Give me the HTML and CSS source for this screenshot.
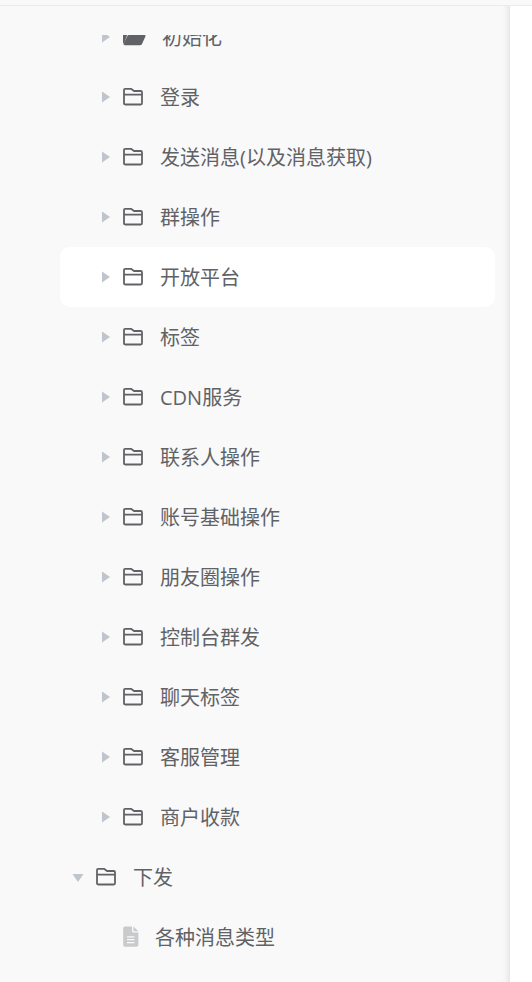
FILE: index.html
```
<!DOCTYPE html>
<html lang="zh-CN">
<head>
    <meta charset="UTF-8">
    <meta name="viewport" content="width=device-width, initial-scale=1.0">
    <title>接口目录</title>
    <link rel="stylesheet" href="styles.css">
</head>
<body>

<!-- Iconos -->
<svg class="sprite" aria-hidden="true">
    <symbol id="caret" viewBox="0 0 8 12">
        <path d="M0 0.5 L8 6 L0 11.5 Z" fill="currentColor"/>
    </symbol>
    <symbol id="folder" viewBox="0 0 22 20">
        <path d="M2 16.8 V2.8 Q2 1.8 3.1 1.8 H9 L12 4 H18.8 Q20 4 20 5.2 V16.3 Q20 17.5 18.8 17.5 H3.2 Q2 17.5 2 16.3 Z M2 7.6 H20" fill="none" stroke="currentColor" stroke-width="1.8" stroke-linejoin="round"/>
    </symbol>
    <symbol id="folder-open" viewBox="0 0 24 20">
        <path d="M1 16 V3 Q1 1 3 1 H8.5 L11.5 4 H18 Q20 4 20 6 V7.2 H7 Q5.6 7.2 5 8.5 L2 16.5 Z" fill="currentColor"/>
        <path d="M6.8 8 H22.5 Q24 8 23.4 9.4 L20 17 Q19.4 18.2 17.8 18.2 H3 Q1 18.2 1.6 16.8 L5.4 9 Q5.8 8 6.8 8 Z" fill="currentColor"/>
    </symbol>
    <symbol id="file" viewBox="0 0 16 22">
        <path d="M2 0.5 H9 V5 Q9 6.5 10.5 6.5 H15.4 V18.9 Q15.4 20.7 13.6 20.7 H2 Q0.2 20.7 0.2 18.9 V2.3 Q0.2 0.5 2 0.5 Z M10.4 0.5 L15.4 5.3 H10.4 Z" fill="currentColor"/>
        <path d="M4 10.8 H11.4 M4 13.7 H11.4 M4 16.6 H11.4" stroke="#f9f9f9" stroke-width="1.3"/>
    </symbol>
</svg>

<header class="topbar"></header>
<div class="layout">
    <nav class="sidebar" aria-label="接口目录">
        <div class="scroll">
            <ul class="tree">
                <li>
                    <ul class="children">
                        <li class="row"><button class="toggle" aria-label="展开"><svg><use href="#caret"/></svg></button><a href="#"><svg class="icon open"><use href="#folder-open"/></svg>初始化</a></li>
                        <li class="row"><button class="toggle" aria-label="展开"><svg><use href="#caret"/></svg></button><a href="#"><svg class="icon"><use href="#folder"/></svg>登录</a></li>
                        <li class="row"><button class="toggle" aria-label="展开"><svg><use href="#caret"/></svg></button><a href="#"><svg class="icon"><use href="#folder"/></svg>发送消息(以及消息获取)</a></li>
                        <li class="row"><button class="toggle" aria-label="展开"><svg><use href="#caret"/></svg></button><a href="#"><svg class="icon"><use href="#folder"/></svg>群操作</a></li>
                        <li class="row active"><button class="toggle" aria-label="展开"><svg><use href="#caret"/></svg></button><a href="#"><svg class="icon"><use href="#folder"/></svg>开放平台</a></li>
                        <li class="row"><button class="toggle" aria-label="展开"><svg><use href="#caret"/></svg></button><a href="#"><svg class="icon"><use href="#folder"/></svg>标签</a></li>
                        <li class="row"><button class="toggle" aria-label="展开"><svg><use href="#caret"/></svg></button><a href="#"><svg class="icon"><use href="#folder"/></svg>CDN服务</a></li>
                        <li class="row"><button class="toggle" aria-label="展开"><svg><use href="#caret"/></svg></button><a href="#"><svg class="icon"><use href="#folder"/></svg>联系人操作</a></li>
                        <li class="row"><button class="toggle" aria-label="展开"><svg><use href="#caret"/></svg></button><a href="#"><svg class="icon"><use href="#folder"/></svg>账号基础操作</a></li>
                        <li class="row"><button class="toggle" aria-label="展开"><svg><use href="#caret"/></svg></button><a href="#"><svg class="icon"><use href="#folder"/></svg>朋友圈操作</a></li>
                        <li class="row"><button class="toggle" aria-label="展开"><svg><use href="#caret"/></svg></button><a href="#"><svg class="icon"><use href="#folder"/></svg>控制台群发</a></li>
                        <li class="row"><button class="toggle" aria-label="展开"><svg><use href="#caret"/></svg></button><a href="#"><svg class="icon"><use href="#folder"/></svg>聊天标签</a></li>
                        <li class="row"><button class="toggle" aria-label="展开"><svg><use href="#caret"/></svg></button><a href="#"><svg class="icon"><use href="#folder"/></svg>客服管理</a></li>
                        <li class="row"><button class="toggle" aria-label="展开"><svg><use href="#caret"/></svg></button><a href="#"><svg class="icon"><use href="#folder"/></svg>商户收款</a></li>
                    </ul>
                </li>
                <li>
                    <div class="row parent"><button class="toggle expanded" aria-label="收起"><svg><use href="#caret"/></svg></button><a href="#"><svg class="icon"><use href="#folder"/></svg>下发</a></div>
                    <ul class="children">
                        <li class="row leaf"><a href="#"><svg class="icon file"><use href="#file"/></svg>各种消息类型</a></li>
                    </ul>
                </li>
            </ul>
        </div>
    </nav>
    <main class="content"></main>
</div>

</body>
</html>
```
FILE: styles.css
```
* {
    box-sizing: border-box;
}
body {
    display: flex;
    flex-direction: column;
    height: 100vh;
    margin: 0;
    overflow: hidden;
    background-color: #fff;
    color: #606266;
    font-family: "Open Sans", "Noto Sans CJK SC", sans-serif;
    font-size: 20px;
}
.sprite {
    position: absolute;
    width: 0;
    height: 0;
}
.topbar {
    flex: none;
    height: 6px;
    background-color: #f9f9f9;
    border-bottom: 1px solid #ebebeb;
}
.layout {
    display: flex;
    flex: 1;
    min-height: 0;
}
.sidebar {
    flex: 0 1 510px;
    padding: 29px 15px 0 60px;
    background-color: #f9f9f9;
    box-shadow: inset -8px 0 8px -8px rgba(0, 0, 0, 0.15);
}
.content {
    flex: 1;
}
.scroll {
    height: 100%;
    overflow: hidden;
}
ul {
    margin: 0;
    padding: 0;
    list-style: none;
}
/* la lista queda desplazada, la primera fila se ve a medias */
.tree {
    margin-top: -28px;
}
.row {
    display: flex;
    align-items: center;
    height: 60px;
    padding-top: 2px;
    padding-left: 38px;
    border-radius: 10px;
}
.row.parent {
    padding-left: 10px;
}
.row.leaf {
    padding-left: 63px;
}
.row:hover,
.row.active {
    background-color: #fff;
}
.toggle {
    display: flex;
    align-items: center;
    justify-content: center;
    width: 16px;
    height: 24px;
    margin-right: 8px;
    margin-bottom: 2px;
    padding: 0;
    border: none;
    background: none;
    color: #c0c4cc;
    cursor: pointer;
}
.toggle.expanded {
    margin-right: 9px;
    margin-bottom: 0;
}
.toggle svg {
    width: 8px;
    height: 12px;
}
.toggle.expanded svg {
    transform: rotate(90deg);
}
.row a {
    display: flex;
    flex: 1;
    align-items: center;
    gap: 16px;
    color: inherit;
    line-height: 58px;
    text-decoration: none;
    white-space: nowrap;
}
.icon {
    flex: none;
    width: 22px;
    height: 20px;
    margin-bottom: 2px;
}
.icon.open {
    width: 24px;
}
.icon.file {
    width: 16px;
    height: 22px;
    color: #c9cacc;
}
```
